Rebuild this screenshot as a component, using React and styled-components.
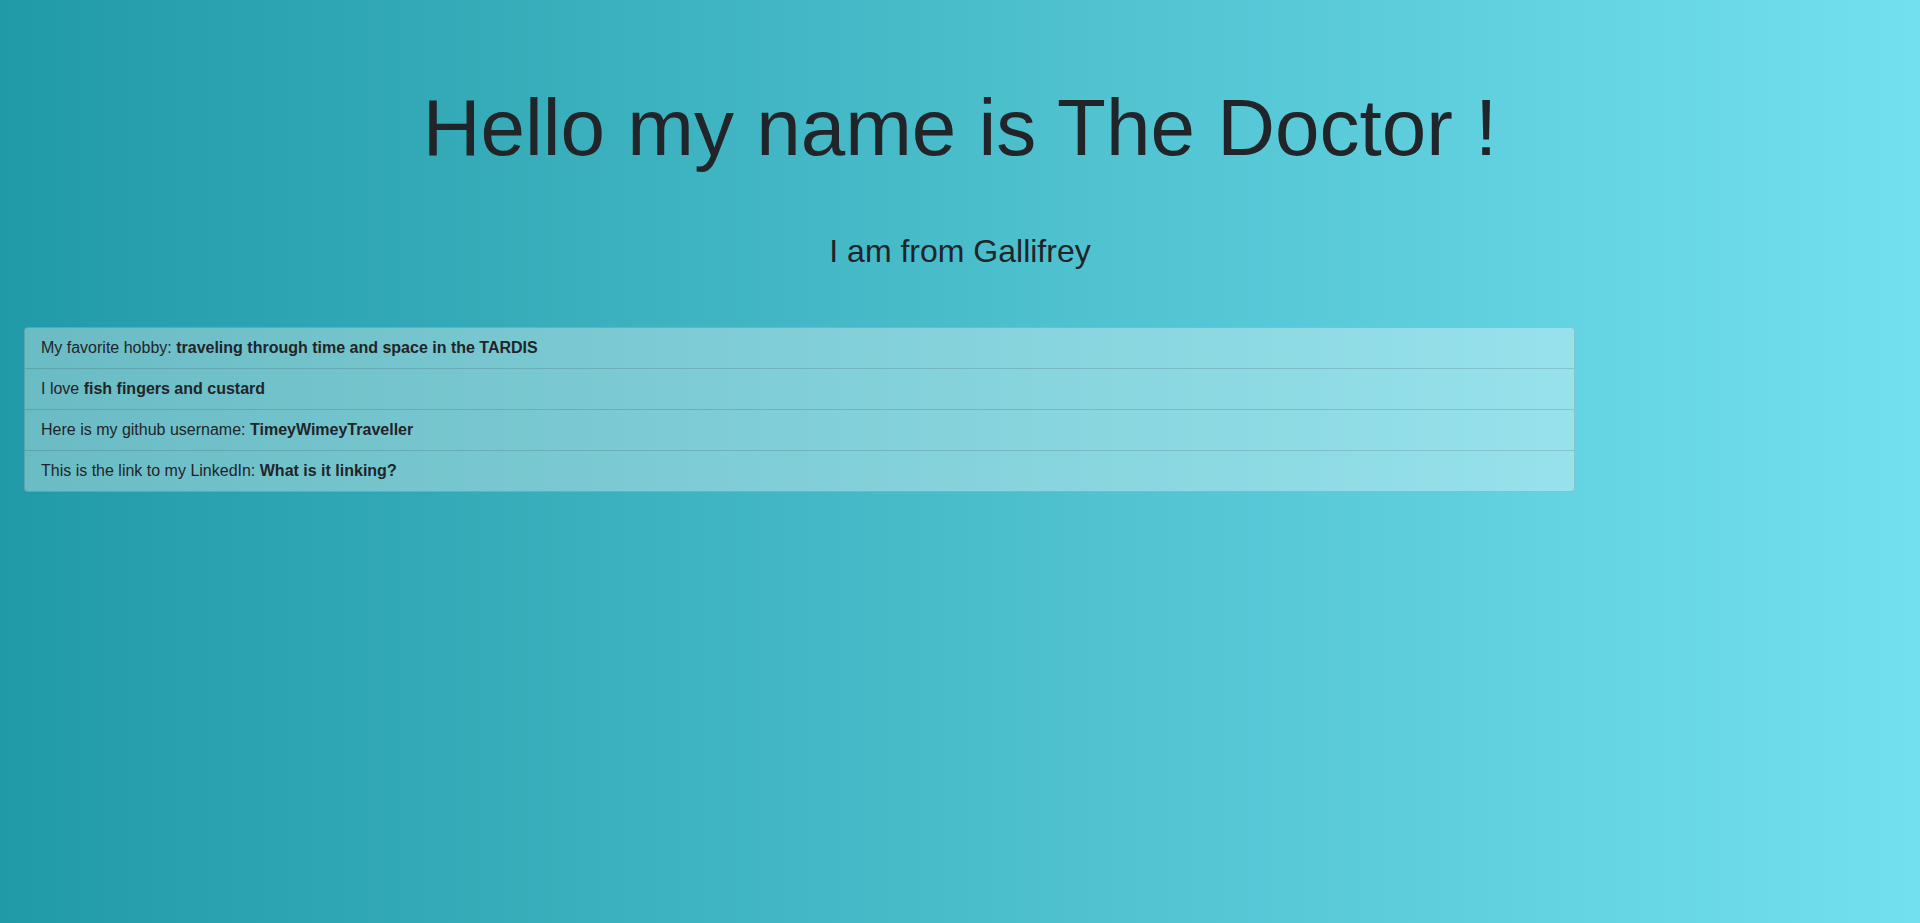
import React from 'react';
import styled, { createGlobalStyle } from 'styled-components';

const GlobalStyle = createGlobalStyle`
  html, body {
    margin: 0;
    padding: 0;
  }

  body {
    font-family: 'Liberation Sans', Arial, sans-serif;
    color: #212529;
  }
`;

const StyledPage = styled.main`
  min-height: 100vh;
  box-sizing: border-box;
  padding: 80px 0 40px;
  background: linear-gradient(to right, #219aa7 0%, #73e0ef 100%);
`;

const StyledHeader = styled.header`
  text-align: center;
`;

const StyledTitle = styled.h1`
  margin: 0;
  font-size: 80px;
  line-height: 1.2;
  font-weight: 400;
`;

const StyledSubtitle = styled.h2`
  margin: 56px 0 0;
  font-size: 32px;
  line-height: 1.2;
  font-weight: 400;
`;

const StyledList = styled.ul`
  width: 1551px;
  box-sizing: border-box;
  margin: 57px 0 0 24px;
  padding: 0;
  list-style: none;
  display: flex;
  flex-direction: column;
`;

const StyledItem = styled.li`
  padding: 8px 16px;
  font-size: 16px;
  line-height: 24px;
  background-color: rgba(255, 255, 255, 0.33);
  border: 1px solid rgba(0, 0, 0, 0.125);

  & + & {
    border-top-width: 0;
  }

  &:first-child {
    border-radius: 4px 4px 0 0;
  }

  &:last-child {
    border-radius: 0 0 4px 4px;
  }
`;

const StyledValue = styled.strong`
  font-weight: 700;
`;

const facts = [
  { label: 'My favorite hobby: ', value: 'traveling through time and space in the TARDIS' },
  { label: 'I love ', value: 'fish fingers and custard' },
  { label: 'Here is my github username: ', value: 'TimeyWimeyTraveller' },
  { label: 'This is the link to my LinkedIn: ', value: 'What is it linking?' },
];

const App = () => (
  <>
    <GlobalStyle />
    <StyledPage>
      <StyledHeader>
        <StyledTitle>Hello my name is The Doctor !</StyledTitle>
        <StyledSubtitle>I am from Gallifrey</StyledSubtitle>
      </StyledHeader>
      <StyledList>
        {facts.map(({ label, value }) => (
          <StyledItem key={label}>
            {label}
            <StyledValue>{value}</StyledValue>
          </StyledItem>
        ))}
      </StyledList>
    </StyledPage>
  </>
);

export default App;
